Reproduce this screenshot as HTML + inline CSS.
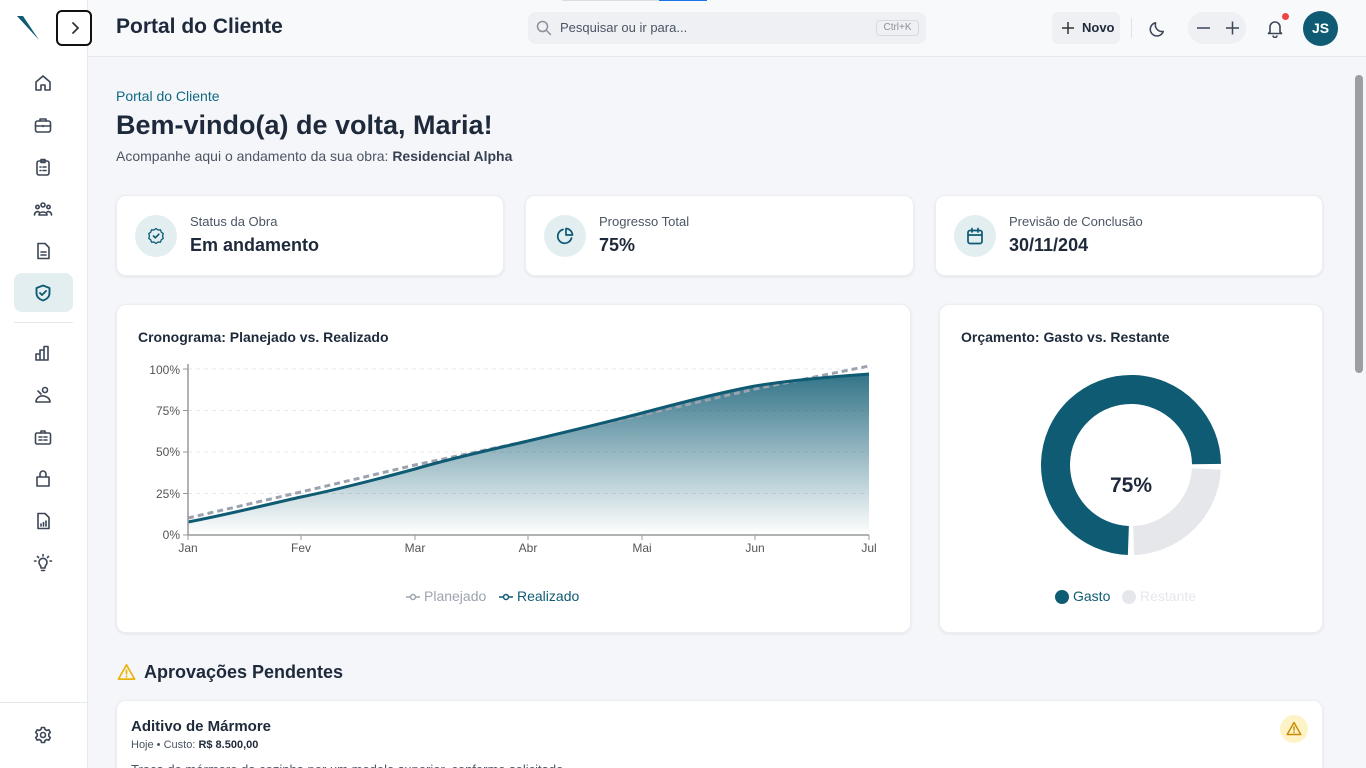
<!DOCTYPE html>
<html style="width:1366px;height:768px;overflow:hidden"><head><meta charset="utf-8">
<style>
*{box-sizing:border-box;margin:0;padding:0}
body{width:1366px;height:768px;overflow:hidden;font-family:"Liberation Sans",Arial,sans-serif;background:#f5f6f9;color:#1e2a3b;position:relative}
.side{position:absolute;left:0;top:0;width:88px;height:768px;background:#fff;border-right:1px solid #e6e8ec}
.hdr{position:absolute;left:88px;top:0;width:1278px;height:57px;background:#f8f9fb;border-bottom:1px solid #e6e8ec}
.ic{position:absolute;left:33px;width:20px;height:20px}
.ic svg{width:20px;height:20px;fill:none;stroke:#3c4656;stroke-width:1.6;stroke-linecap:round;stroke-linejoin:round}
.card{position:absolute;background:#fff;border-radius:10px;box-shadow:0 1px 3px rgba(0,0,0,.08);border:1px solid #eceef2}
.stat .circ{position:absolute;left:18px;top:19px;width:42px;height:42px;border-radius:50%;background:#e3eef1}
.stat .circ svg{position:absolute;left:12px;top:12px;width:18px;height:18px;fill:none;stroke:#0e5b73;stroke-width:1.7;stroke-linecap:round;stroke-linejoin:round}
.stat .l{position:absolute;left:73px;top:18px;font-size:13px;color:#4b5563}
.stat .v{position:absolute;left:73px;top:39px;font-size:18px;font-weight:bold;color:#1e2a3b}
.ctitle{position:absolute;left:21px;top:24px;font-size:14px;font-weight:bold}
</style></head><body>
<div class="side">
  <svg style="position:absolute;left:16px;top:15px" width="24" height="26" viewBox="0 0 24 26"><path d="M1 1 L7 1 L23 25 Z" fill="#0e5b73"/></svg>
  <div class="ic" style="top:73px"><svg viewBox="0 0 20 20"><path d="M3 9 L10 3 L17 9 V17 H12 V12 H8 V17 H3 Z"/></svg></div>
  <div class="ic" style="top:115px"><svg viewBox="0 0 20 20"><rect x="2.5" y="6" width="15" height="11" rx="2"/><path d="M7 6V4h6v2M2.5 11h15M10 10.5v1"/></svg></div>
  <div class="ic" style="top:157px"><svg viewBox="0 0 20 20"><rect x="4" y="4" width="12" height="14" rx="2"/><path d="M8 2.5h4v3H8z M7 10h1M10 10h3M7 13.5h1M10 13.5h3"/></svg></div>
  <div class="ic" style="top:199px"><svg viewBox="0 0 20 20"><circle cx="10" cy="6" r="2"/><circle cx="4.5" cy="8" r="1.7"/><circle cx="15.5" cy="8" r="1.7"/><path d="M6 16c0-4 8-4 8 0M1.5 16c0-3 3-4 4.5-3M18.5 16c0-3-3-4-4.5-3M6 16h8"/></svg></div>
  <div class="ic" style="top:241px"><svg viewBox="0 0 20 20"><path d="M5 2.5h7l4 4V17.5H5z"/><path d="M8 11h5M8 14h5"/></svg></div>
  <div style="position:absolute;left:14px;top:273px;width:59px;height:39px;border-radius:8px;background:#e3eef1"></div>
  <div class="ic" style="top:283px"><svg viewBox="0 0 20 20" style="stroke:#0e5b73;stroke-width:1.9"><path d="M10 2.5 L16.5 5 V10 C16.5 14 13.5 16.5 10 17.5 C6.5 16.5 3.5 14 3.5 10 V5 Z"/><path d="M7 10l2 2 4-4"/></svg></div>
  <div style="position:absolute;left:14px;top:322px;width:59px;height:1px;background:#e6e8ec"></div>
  <div class="ic" style="top:343px"><svg viewBox="0 0 20 20"><path d="M3 17V11h4v6M7 17V7h4v10M11 17V3.5h4V17M3 17h12"/></svg></div>
  <div class="ic" style="top:385px"><svg viewBox="0 0 20 20"><circle cx="12" cy="5" r="2.5"/><path d="M3 17c0-4 4-7 8-6s6 3 6 6zM8 9l-3-3"/></svg></div>
  <div class="ic" style="top:427px"><svg viewBox="0 0 20 20"><rect x="2.5" y="6" width="15" height="11" rx="1.5"/><path d="M8 6V4h4v2M6 10h3M11 10h3M6 13h3M11 13h3"/></svg></div>
  <div class="ic" style="top:469px"><svg viewBox="0 0 20 20"><path d="M4 8h12v9H4z M7 8V5a3 3 0 0 1 6 0v3"/></svg></div>
  <div class="ic" style="top:511px"><svg viewBox="0 0 20 20"><path d="M5 2.5h7l4 4V17.5H5z"/><path d="M8 15v-2M10.5 15v-3.5M13 15v-5"/></svg></div>
  <div class="ic" style="top:553px"><svg viewBox="0 0 20 20"><path d="M7 12a4 4 0 1 1 6 0c-1 1-1 2-1 3H8c0-1 0-2-1-3zM8.5 17.5h3M10 1.5v1.5M3 8H1.5M18.5 8H17M4.5 3.5l1 1M15.5 3.5l-1 1"/></svg></div>
  <div style="position:absolute;left:0;top:702px;width:87px;height:1px;background:#e6e8ec"></div>
  <div class="ic" style="top:725px"><svg viewBox="0 0 20 20"><circle cx="10" cy="10" r="2.5"/><path d="M8.5 2.5h3l.5 2 1.8 1 2-.7 1.5 2.6-1.5 1.4v2.4l1.5 1.4-1.5 2.6-2-.7-1.8 1-.5 2h-3l-.5-2-1.8-1-2 .7-1.5-2.6 1.5-1.4V8.8L2.7 7.4l1.5-2.6 2 .7 1.8-1z"/></svg></div>
</div>
<div class="hdr">
  <div style="position:absolute;left:-32px;top:10px;width:36px;height:36px;border:2px solid #111;border-radius:6px;background:#fff"><svg style="position:absolute;left:10px;top:9px" width="14" height="14" viewBox="0 0 14 14"><path d="M5 2l5 5-5 5" fill="none" stroke="#333" stroke-width="1.8" stroke-linecap="round"/></svg></div>
  <div style="position:absolute;left:28px;top:15px;font-size:21px;font-weight:bold;color:#1e2a3b">Portal do Cliente</div>
  <div style="position:absolute;left:474px;top:0;width:100px;height:1px;background:#ddd"></div>
  <div style="position:absolute;left:571px;top:0;width:48px;height:1px;background:#1a73e8"></div>
  <div style="position:absolute;left:440px;top:12px;width:398px;height:32px;border-radius:8px;background:#eff0f3">
    <svg style="position:absolute;left:8px;top:8px" width="16" height="16" viewBox="0 0 16 16"><circle cx="6.5" cy="6.5" r="5" fill="none" stroke="#8a919c" stroke-width="1.5"/><path d="M10.5 10.5L14.5 14.5" stroke="#8a919c" stroke-width="1.5" stroke-linecap="round"/></svg>
    <div style="position:absolute;left:32px;top:8px;font-size:13px;color:#4b5563">Pesquisar ou ir para...</div>
    <div style="position:absolute;left:348px;top:8px;width:43px;height:16px;border:1px solid #d6d9de;border-radius:4px;font-size:10px;color:#8a919c;text-align:center;line-height:14px">Ctrl+K</div>
  </div>
  <div style="position:absolute;left:964px;top:12px;width:68px;height:32px;border-radius:7px;background:#eff0f3;font-size:13px;font-weight:bold;line-height:32px;padding-left:30px">Novo</div>
  <svg style="position:absolute;left:973px;top:21px" width="14" height="14" viewBox="0 0 14 14"><path d="M7 1v12M1 7h12" stroke="#333" stroke-width="1.5"/></svg>
  <div style="position:absolute;left:1043px;top:18px;width:1px;height:20px;background:#dfe2e6"></div>
  <svg style="position:absolute;left:1061px;top:19px" width="19" height="19" viewBox="0 0 20 20"><path d="M15 13A7 7 0 0 1 7 4a7 7 0 1 0 8 9z" fill="none" stroke="#3c4656" stroke-width="1.6" stroke-linejoin="round"/></svg>
  <div style="position:absolute;left:1100px;top:12px;width:58px;height:32px;border-radius:16px;background:#eff0f3"></div>
  <svg style="position:absolute;left:1108px;top:21px" width="44" height="14" viewBox="0 0 44 14"><path d="M1 7h13M30 7h13M36.5 0.5v13" stroke="#3c4656" stroke-width="1.5"/></svg>
  <svg style="position:absolute;left:1177px;top:18px" width="20" height="20" viewBox="0 0 20 20"><path d="M5 14V9a5 5 0 0 1 10 0v5l1.5 1.5h-13z M8 17.5a2 2 0 0 0 4 0" fill="none" stroke="#3c4656" stroke-width="1.6" stroke-linejoin="round"/></svg>
  <div style="position:absolute;left:1194px;top:13px;width:7px;height:7px;border-radius:50%;background:#ef4444"></div>
  <div style="position:absolute;left:1215px;top:11px;width:35px;height:35px;border-radius:50%;background:#0e5b73;color:#fff;font-size:14px;font-weight:bold;text-align:center;line-height:35px">JS</div>
</div>
<div style="position:absolute;left:1354px;top:57px;width:12px;height:711px;background:#f5f6f9"></div>
<div style="position:absolute;left:1355px;top:75px;width:8px;height:298px;border-radius:4px;background:#9b9ea3"></div>

<div style="position:absolute;left:116px;top:88px;font-size:14px;color:#0e6a82">Portal do Cliente</div>
<div style="position:absolute;left:116px;top:110px;font-size:27px;font-weight:bold;color:#1e2a3b">Bem-vindo(a) de volta, Maria!</div>
<div style="position:absolute;left:116px;top:148px;font-size:14px;color:#4b5563">Acompanhe aqui o andamento da sua obra: <b style="color:#374151">Residencial Alpha</b></div>

<div class="card stat" style="left:116px;top:195px;width:388px;height:81px"><div class="circ"><svg viewBox="0 0 18 18"><path d="M9 1.5l2 1.5 2.5-.2.8 2.4 2 1.4-.8 2.4.8 2.4-2 1.4-.8 2.4-2.5-.2-2 1.5-2-1.5-2.5.2-.8-2.4-2-1.4.8-2.4-.8-2.4 2-1.4.8-2.4 2.5.2z" stroke-width="1.3"/><path d="M6.5 9l1.8 1.8 3.5-3.5"/></svg></div><div class="l">Status da Obra</div><div class="v">Em andamento</div></div>
<div class="card stat" style="left:525px;top:195px;width:389px;height:81px"><div class="circ"><svg viewBox="0 0 18 18"><path d="M15.5 11A7 7 0 1 1 7 2.5"/><path d="M10 1.5A7 7 0 0 1 16.5 8H10z"/></svg></div><div class="l">Progresso Total</div><div class="v">75%</div></div>
<div class="card stat" style="left:935px;top:195px;width:388px;height:81px"><div class="circ"><svg viewBox="0 0 18 18"><rect x="2" y="3.5" width="14" height="13" rx="2"/><path d="M2 8h14M6 1.5v3.5M12 1.5v3.5"/></svg></div><div class="l">Previsão de Conclusão</div><div class="v">30/11/204</div></div>

<div class="card" style="left:116px;top:304px;width:795px;height:329px">
  <div class="ctitle">Cronograma: Planejado vs. Realizado</div>
</div>
<svg style="position:absolute;left:0;top:0" width="1366" height="768">
  <defs><linearGradient id="g" x1="0" y1="0" x2="0" y2="1"><stop offset="0" stop-color="#0e5b73" stop-opacity=".85"/><stop offset="1" stop-color="#0e5b73" stop-opacity="0"/></linearGradient></defs>
  <g stroke="#e5e7eb" stroke-dasharray="4 4"><path d="M188 369H869M188 410.5H869M188 452H869M188 493.5H869"/></g>
  <path d="M188 522 C230 514,265 505,301 497 C340 489,378 479,415 469 C452 458,490 450,528 441 C566 432,604 423,642 413 C680 403,718 393,755 386 C792 380,830 377,869 374 L869 535 L188 535Z" fill="url(#g)"/>
  <path d="M188 518 L301 492 L415 465 L528 441 L642 415 L755 389 L869 366" fill="none" stroke="#9ca3af" stroke-width="3" stroke-dasharray="6 4"/>
  <path d="M188 522 C230 514,265 505,301 497 C340 489,378 479,415 469 C452 458,490 450,528 441 C566 432,604 423,642 413 C680 403,718 393,755 386 C792 380,830 377,869 374" fill="none" stroke="#0e5b73" stroke-width="3"/>
  <path d="M188 364V535H869" fill="none" stroke="#999" stroke-width="1.5"/>
  <g stroke="#999"><path d="M183 369h5M183 410.5h5M183 452h5M183 493.5h5M183 535h5M188 535v5M301 535v5M415 535v5M528 535v5M642 535v5M755 535v5M869 535v5"/></g>
  <g font-family="Liberation Sans" font-size="12" fill="#555" text-anchor="end"><text x="180" y="374">100%</text><text x="180" y="415">75%</text><text x="180" y="456">50%</text><text x="180" y="498">25%</text><text x="180" y="539">0%</text></g>
  <g font-family="Liberation Sans" font-size="12" fill="#555" text-anchor="middle"><text x="188" y="552">Jan</text><text x="301" y="552">Fev</text><text x="415" y="552">Mar</text><text x="528" y="552">Abr</text><text x="642" y="552">Mai</text><text x="755" y="552">Jun</text><text x="869" y="552">Jul</text></g>
  <g font-family="Liberation Sans" font-size="14"><path d="M406 597h14" stroke="#9ca3af" stroke-width="1.5"/><circle cx="413" cy="597" r="2.5" fill="#fff" stroke="#9ca3af" stroke-width="1.5"/><text x="424" y="601" fill="#9ca3af">Planejado</text>
  <path d="M499 597h14" stroke="#0e5b73" stroke-width="1.5"/><circle cx="506" cy="597" r="2.5" fill="#fff" stroke="#0e5b73" stroke-width="1.5"/><text x="517" y="601" fill="#0e5b73">Realizado</text></g>
</svg>
<div class="card" style="left:939px;top:304px;width:384px;height:329px">
  <div class="ctitle">Orçamento: Gasto vs. Restante</div>
</div>
<svg style="position:absolute;left:0;top:0" width="1366" height="768">
  <circle cx="1131" cy="465" r="75.5" fill="none" stroke="#0e5b73" stroke-width="29" stroke-dasharray="352 474.4" transform="rotate(92 1131 465)"/>
  <circle cx="1131" cy="465" r="75.5" fill="none" stroke="#e5e7eb" stroke-width="29" stroke-dasharray="112 474.4" transform="rotate(3 1131 465)"/>
  <text x="1131" y="492" font-family="Liberation Sans" font-size="21" font-weight="bold" fill="#1e2a3b" text-anchor="middle">75%</text>
  <circle cx="1062" cy="597" r="7" fill="#0e5b73"/><text x="1073" y="601" font-family="Liberation Sans" font-size="14" fill="#0e5b73">Gasto</text>
  <circle cx="1129" cy="597" r="7" fill="#e5e7eb"/><text x="1140" y="601" font-family="Liberation Sans" font-size="14" fill="#e5e7eb">Restante</text>
</svg>

<svg style="position:absolute;left:117px;top:663px" width="19" height="18" viewBox="0 0 20 18"><path d="M10 1.5L18.5 16.5H1.5Z" fill="none" stroke="#eab308" stroke-width="1.8" stroke-linejoin="round"/><path d="M10 7v4M10 13.5v.5" stroke="#eab308" stroke-width="1.8" stroke-linecap="round"/></svg>
<div style="position:absolute;left:144px;top:662px;font-size:18px;font-weight:bold;color:#1e2a3b">Aprovações Pendentes</div>
<div class="card" style="left:116px;top:700px;width:1207px;height:68px;overflow:hidden;border-bottom:none;border-radius:10px 10px 0 0">
  <div style="position:absolute;left:14px;top:17px;font-size:15px;font-weight:bold">Aditivo de Mármore</div>
  <div style="position:absolute;left:14px;top:38px;font-size:11px;color:#4b5563">Hoje • Custo: <b style="color:#1e2a3b">R$ 8.500,00</b></div>
  <div style="position:absolute;left:14px;top:61px;font-size:13px;color:#4b5563">Troca de mármore da cozinha por um modelo superior, conforme solicitado.</div>
  <div style="position:absolute;left:1163px;top:14px;width:28px;height:28px;border-radius:50%;background:#fef3c7"><svg style="position:absolute;left:6px;top:6px" width="16" height="15" viewBox="0 0 20 18"><path d="M10 1.5L18.5 16.5H1.5Z" fill="none" stroke="#ca8a04" stroke-width="1.8" stroke-linejoin="round"/><path d="M10 7v4M10 13.5v.5" stroke="#ca8a04" stroke-width="1.8" stroke-linecap="round"/></svg></div>
</div>
</body></html>
